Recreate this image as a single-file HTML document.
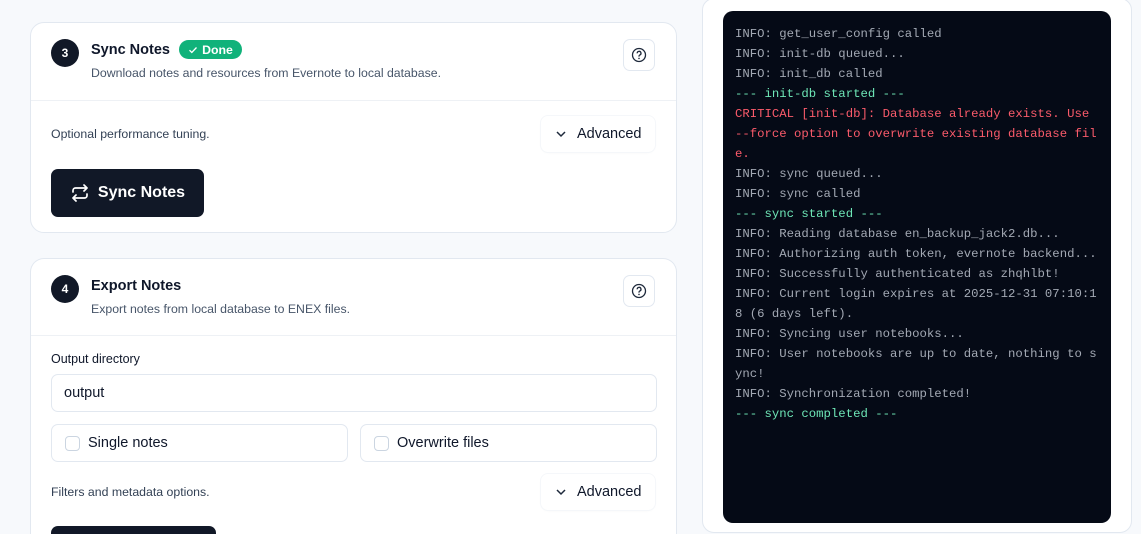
<!DOCTYPE html>
<html style="width:1141px;height:534px;overflow:hidden"><head><meta charset="utf-8"><style>
*{box-sizing:border-box;margin:0;padding:0}
body{width:1141px;height:534px;overflow:hidden;background:#f7f9fc;font-family:"Liberation Sans",sans-serif;color:#0f172a;position:relative}
.card{position:absolute;left:30px;width:647px;background:#fff;border:1px solid #e2e8f0;border-radius:14px;overflow:hidden}
.num{position:absolute;left:20px;width:28px;height:28px;border-radius:50%;background:#111827;color:#fff;font-size:12px;font-weight:bold;text-align:center;line-height:28px}
.title{position:absolute;left:60px;font-size:14.5px;font-weight:bold}
.desc{position:absolute;left:60px;font-size:12.3px;color:#475569}
.help{position:absolute;right:21px;width:32px;height:32px;border:1px solid #e2e8f0;border-radius:7px;display:flex;align-items:center;justify-content:center}
.hr{position:absolute;left:0;right:0;height:1px;background:#eef1f5}
.small{position:absolute;left:20px;font-size:12.3px;color:#334155}
.adv{position:absolute;right:21px;width:114px;height:36px;border-radius:7px;box-shadow:0 0 0 1px #f5f7fa,0 1px 2px rgba(0,0,0,0.03);font-size:14.5px;display:flex;align-items:center;padding-left:14px;gap:10px}
.btn{position:absolute;left:20px;background:#111827;color:#fff;border-radius:7px;font-size:16px;font-weight:bold;display:flex;align-items:center;justify-content:center;gap:8px}
.box{position:absolute;border:1px solid #e2e8f0;border-radius:7px;font-size:14.5px;display:flex;align-items:center}
.cb{width:15px;height:15px;border:1px solid #cbd5e1;border-radius:4px;margin:0 8px 0 13px}
.term{position:absolute;left:723px;top:11px;width:388px;height:512px;background:#050a16;border-radius:10px;padding:13px 0 0 12px;font-family:"Liberation Mono",monospace;font-size:12.3px;line-height:20px;color:#a3a9b4;white-space:pre}
.g{color:#6ee7b7}.r{color:#fb5b6b}
</style></head><body>
<div style="position:absolute;left:702px;top:-2px;width:430px;height:535px;background:#fff;border:1px solid #e2e8f0;border-radius:12px"></div>

<div class="card" style="top:22px;height:211px">
 <div class="num" style="top:16px">3</div>
 <div class="title" style="top:19px">Sync Notes</div>
 <div style="position:absolute;left:148px;top:17px;width:63px;height:19px;border-radius:10px;background:#10b27a;color:#fff;font-size:12.3px;font-weight:bold;display:flex;align-items:center;justify-content:center;gap:4px"><svg width="10" height="10" viewBox="0 0 10 10"><path d="M1.5 5.2l2.3 2.3 4.7-5" stroke="#fff" stroke-width="1.3" fill="none"/></svg>Done</div>
 <div class="desc" style="top:43px">Download notes and resources from Evernote to local database.</div>
 <div class="help" style="top:16px"><svg width="16" height="16" viewBox="0 0 16 16"><circle cx="8" cy="8" r="6.5" stroke="#1e293b" stroke-width="1.3" fill="none"/><path d="M6.2 6.3a1.9 1.9 0 1 1 2.6 1.7c-.5.3-.8.6-.8 1.2v.4" stroke="#1e293b" stroke-width="1.3" fill="none"/><circle cx="8" cy="11.4" r=".8" fill="#1e293b"/></svg></div>
 <div class="hr" style="top:77px"></div>
 <div class="small" style="top:104px">Optional performance tuning.</div>
 <div class="adv" style="top:93px"><svg width="12" height="8" viewBox="0 0 12 8"><path d="M2 2l4 4 4-4" stroke="#1e293b" stroke-width="1.5" fill="none"/></svg>Advanced</div>
 <div class="btn" style="top:146px;width:153px;height:48px"><svg width="20" height="18" viewBox="0 0 20 18"><path d="M3 8V6.5A2.5 2.5 0 0 1 5.5 4H17M14 1l3 3-3 3M17 10v1.5A2.5 2.5 0 0 1 14.5 14H3M6 17l-3-3 3-3" stroke="#fff" stroke-width="1.7" fill="none" stroke-linecap="round" stroke-linejoin="round"/></svg>Sync Notes</div>
</div>

<div class="card" style="top:258px;height:276px;border-bottom:none;border-radius:14px 14px 0 0">
 <div class="num" style="top:16px">4</div>
 <div class="title" style="top:19px">Export Notes</div>
 <div class="desc" style="top:43px">Export notes from local database to ENEX files.</div>
 <div class="help" style="top:16px"><svg width="16" height="16" viewBox="0 0 16 16"><circle cx="8" cy="8" r="6.5" stroke="#1e293b" stroke-width="1.3" fill="none"/><path d="M6.2 6.3a1.9 1.9 0 1 1 2.6 1.7c-.5.3-.8.6-.8 1.2v.4" stroke="#1e293b" stroke-width="1.3" fill="none"/><circle cx="8" cy="11.4" r=".8" fill="#1e293b"/></svg></div>
 <div class="hr" style="top:76px"></div>
 <div class="small" style="top:93px;color:#0f172a;font-size:12.5px">Output directory</div>
 <div class="box" style="left:20px;top:115px;width:606px;height:38px;padding-left:12px">output</div>
 <div class="box" style="left:20px;top:165px;width:297px;height:38px"><span class="cb"></span>Single notes</div>
 <div class="box" style="left:329px;top:165px;width:297px;height:38px"><span class="cb"></span>Overwrite files</div>
 <div class="small" style="top:226px">Filters and metadata options.</div>
 <div class="adv" style="top:215px"><svg width="12" height="8" viewBox="0 0 12 8"><path d="M2 2l4 4 4-4" stroke="#1e293b" stroke-width="1.5" fill="none"/></svg>Advanced</div>
 <div class="btn" style="top:267px;width:165px;height:48px"></div>
</div>

<div class="term">INFO: get_user_config called
INFO: init-db queued...
INFO: init_db called
<span class="g">--- init-db started ---</span>
<span class="r">CRITICAL [init-db]: Database already exists. Use
--force option to overwrite existing database fil
e.</span>
INFO: sync queued...
INFO: sync called
<span class="g">--- sync started ---</span>
INFO: Reading database en_backup_jack2.db...
INFO: Authorizing auth token, evernote backend...
INFO: Successfully authenticated as zhqhlbt!
INFO: Current login expires at 2025-12-31 07:10:1
8 (6 days left).
INFO: Syncing user notebooks...
INFO: User notebooks are up to date, nothing to s
ync!
INFO: Synchronization completed!
<span class="g">--- sync completed ---</span></div>
</body></html>
